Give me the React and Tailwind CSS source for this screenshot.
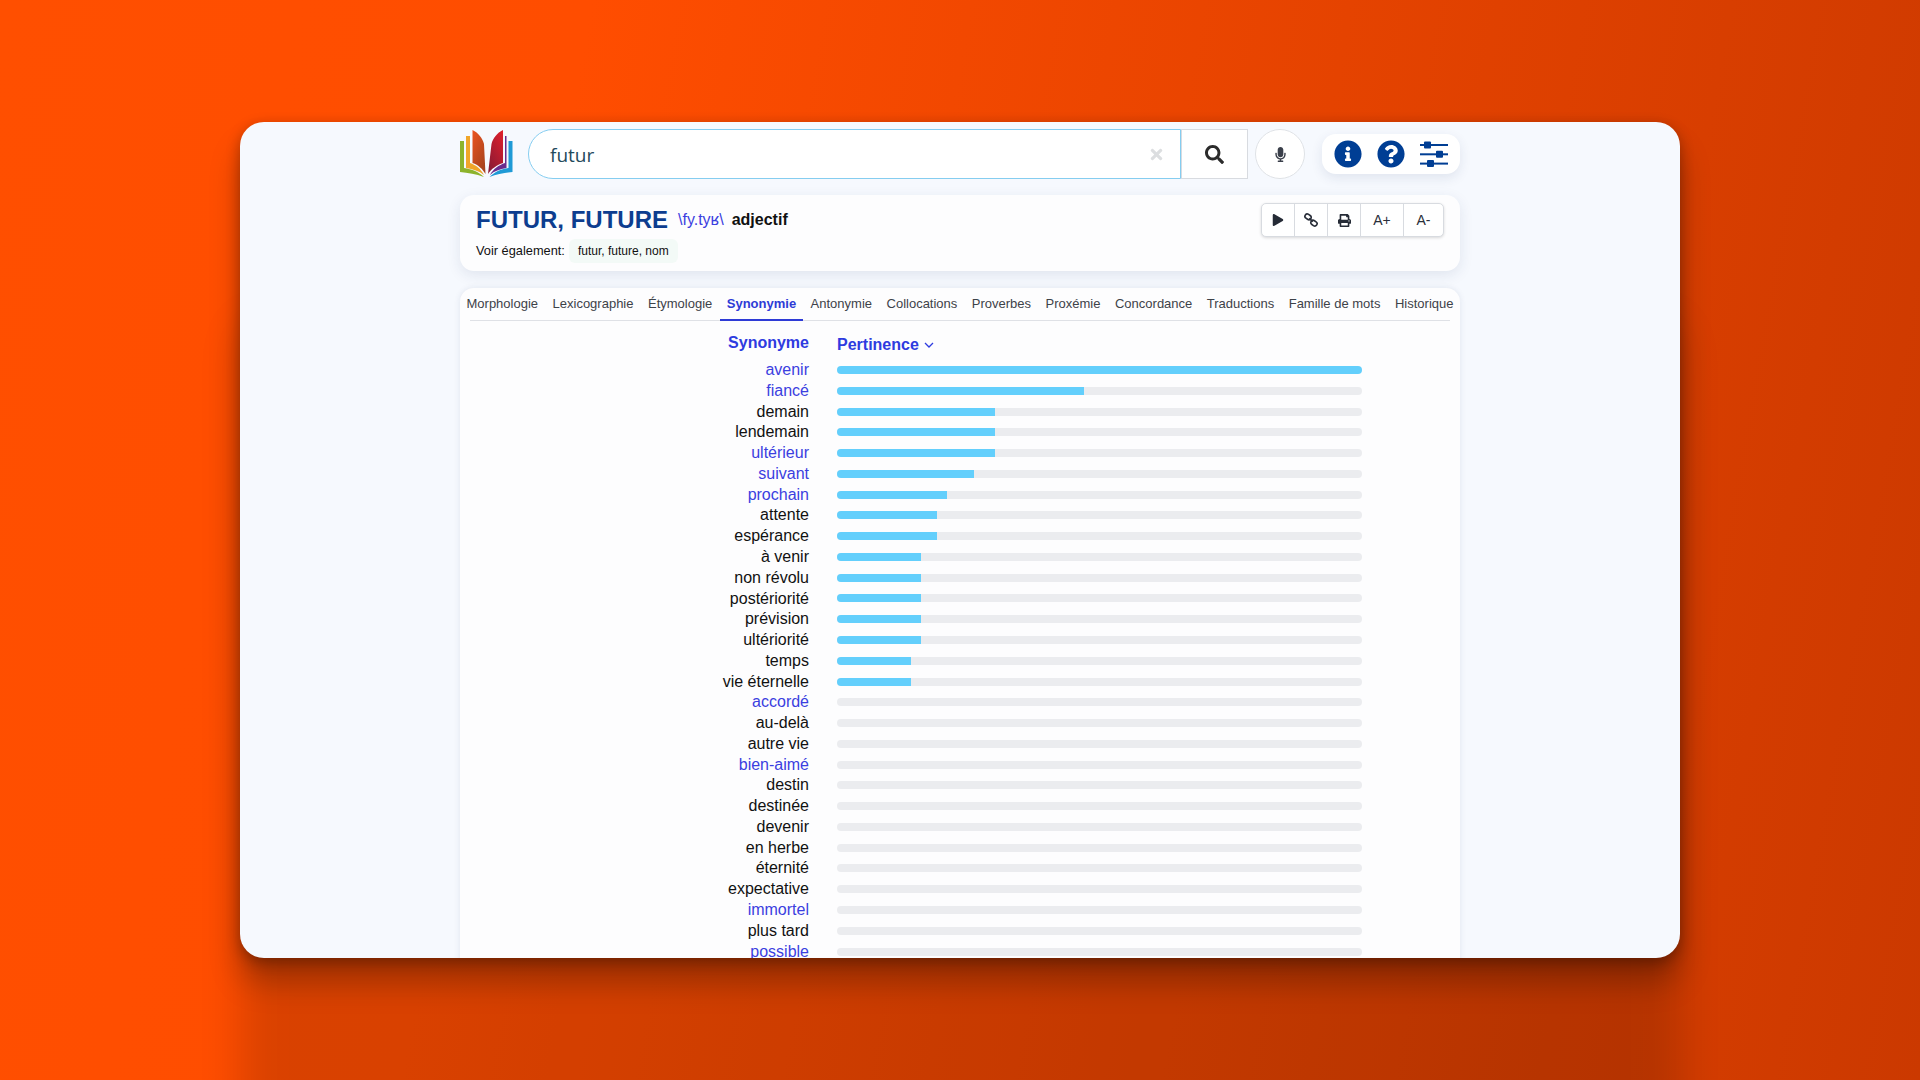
import React from "react";
import { FaInfoCircle, FaQuestionCircle, FaSearch, FaMicrophone, FaTimes, FaPlay, FaPrint } from "react-icons/fa";

const tabs = ["Morphologie","Lexicographie","Étymologie","Synonymie","Antonymie","Collocations","Proverbes","Proxémie","Concordance","Traductions","Famille de mots","Historique"];
const rows = [
  ["avenir",1,100],["fiancé",1,47],["demain",0,30],["lendemain",0,30],["ultérieur",1,30],["suivant",1,26],["prochain",1,21],["attente",0,19],["espérance",0,19],["à venir",0,16],["non révolu",0,16],["postériorité",0,16],["prévision",0,16],["ultériorité",0,16],["temps",0,14],["vie éternelle",0,14],["accordé",1,0],["au-delà",0,0],["autre vie",0,0],["bien-aimé",1,0],["destin",0,0],["destinée",0,0],["devenir",0,0],["en herbe",0,0],["éternité",0,0],["expectative",0,0],["immortel",1,0],["plus tard",0,0],["possible",1,0],
];

function Logo() {
  return (
    <svg viewBox="0 0 54 50" className="w-[54px] h-[50px] shrink-0">
      <defs>
        <linearGradient id="lg1" x1="0" y1="0" x2="0.6" y2="1"><stop offset="0" stopColor="#ec5420"/><stop offset="1" stopColor="#a8441e"/></linearGradient>
        <linearGradient id="lg2" x1="1" y1="0" x2="0.4" y2="1"><stop offset="0" stopColor="#e2202c"/><stop offset="1" stopColor="#8e1a34"/></linearGradient>
      </defs>
      <path d="M1 12h4v27c8 1 15 4 20 9-8-3-16-4-24-5z" fill="#8db32c"/>
      <path d="M7 7h4v27c6 2 11 6 14 12-5-4-11-6-18-7z" fill="#f0a62a"/>
      <path d="M13.500 1c6 3 10 8 11.500 14l1.500 30c-3-5-7-9-13-11z" fill="url(#lg1)"/>
      <path d="M44 1c-6 3-10 8-11.500 14L29 45c3-5 9-9 15-11z" fill="url(#lg2)"/>
      <path d="M47.500 7h-1.500v27c-6 2-12 6-15 12 4-4 10-6 16.500-7z" fill="#6a2c8e"/>
      <path d="M53.500 12h-4v27c-8 1-14 4-19 9 7-3 15-4 23-5z" fill="#1f9ad6"/>
    </svg>
  );
}

function Sliders() {
  return (
    <svg viewBox="0 0 28 28" className="w-[28px] h-[28px]" fill="#003e94">
      <rect x="0" y="4" width="28" height="2"/><rect x="4" y="1.500" width="7" height="7" rx="1"/>
      <rect x="0" y="13.300" width="28" height="2"/><rect x="16" y="10.800" width="7" height="7" rx="1"/>
      <rect x="0" y="22.600" width="28" height="2"/><rect x="7" y="20.100" width="7" height="7" rx="1"/>
    </svg>
  );
}

function LinkIcon() {
  return (
    <svg viewBox="0 0 14 14" className="w-[14px] h-[14px]" fill="none" stroke="#2a2f3a" strokeWidth="1.600">
      <rect x="0.800" y="1.500" width="6.500" height="4.600" rx="2.300" transform="rotate(35 4 3.800)"/>
      <rect x="6.700" y="7.900" width="6.500" height="4.600" rx="2.300" transform="rotate(35 10 10.200)"/>
      <path d="M5 5.500l4 3"/>
    </svg>
  );
}

export default function App() {
  return (
    <div className="w-full h-[1080px] overflow-hidden pt-[122px] font-['Liberation_Sans',Arial,sans-serif] bg-[linear-gradient(100deg,#ff4f00_0%,#ff4d00_28%,#cb3900_100%)]">
      <div className="w-[1440px] h-[836px] mx-auto bg-[#f6f9fe] rounded-[24px] overflow-hidden shadow-[0_4px_14px_rgba(0,0,0,0.3),0_25px_30px_rgba(0,0,0,0.26),0_200px_40px_rgba(0,0,0,0.15)]">
        <div className="w-[1000px] mx-auto">
          <div className="h-[73px] flex items-start pt-[7px] -ml-px">
            <Logo />
            <div className="ml-[15px] w-[721px] h-[50px] flex">
              <div className="flex-1 flex items-center bg-white border border-[#85cdf0] rounded-l-[25px] pl-[21px] pr-[15px]">
                <span className="flex-1 pt-[2px] text-[19px] text-[#1f4a5c] font-['Open_Sans',sans-serif]">futur</span>
                <FaTimes className="text-[#dcdee0] w-[17px] h-[17px]" />
              </div>
              <div className="w-[67px] flex items-center justify-center bg-white border border-l-[#d8dbe0] border-[#d8dbe0]">
                <FaSearch className="text-[#2b2b2b] w-[19px] h-[19px]" />
              </div>
            </div>
            <div className="ml-[7px] w-[50px] h-[50px] rounded-full bg-white border border-[#dfe2e6] flex items-center justify-center">
              <FaMicrophone className="text-[#3a3f4a] w-[13px] h-[15px]" />
            </div>
            <div className="ml-[17px] w-[138px] h-[40px] mt-[5px] bg-white rounded-[14px] shadow-[0_4px_12px_rgba(34,50,100,0.10)] flex items-center justify-between px-[12px]">
              <FaInfoCircle className="text-[#003e94] w-[28px] h-[28px]" />
              <FaQuestionCircle className="text-[#003e94] w-[28px] h-[28px]" />
              <Sliders />
            </div>
          </div>

          <div className="h-[76px] bg-[#fdfdfe] rounded-[14px] shadow-[0_4px_14px_rgba(34,50,100,0.10)] pl-[16px] pr-[16px] flex justify-between">
            <div>
              <div className="flex items-center mt-[10px] h-[30px]">
                <span className="text-[24px] font-bold text-[#0d3d8f] leading-[30px]">FUTUR, FUTURE</span>
                <span className="ml-[10px] text-[16px] text-[#3b3fe0]">\fy.tyʁ\</span>
                <span className="ml-[8px] text-[16px] font-bold text-[#111]">adjectif</span>
              </div>
              <div className="flex items-center mt-[4px] text-[#111]">
                <span className="text-[12.8px]">Voir également:</span>
                <span className="ml-[4px] px-[9px] h-[24px] flex items-center rounded-[6px] bg-[#f3faf7] text-[12px]">futur, future, nom</span>
              </div>
            </div>
            <div className="mt-[8px] h-[34px] flex bg-white border border-[#d8dbe0] rounded-[5px] shadow-[0_1px_3px_rgba(0,0,0,0.15)] text-[14px] text-[#2a2f3a]">
              <div className="w-[33px] flex items-center justify-center border-r border-[#d8dbe0]"><FaPlay className="w-[12px] h-[12px] text-[#252b36]" /></div>
              <div className="w-[33px] flex items-center justify-center border-r border-[#d8dbe0]"><LinkIcon /></div>
              <div className="w-[33px] flex items-center justify-center border-r border-[#d8dbe0]"><FaPrint className="w-[13px] h-[13px] text-[#252b36]" /></div>
              <div className="w-[43px] flex items-center justify-center border-r border-[#d8dbe0]">A+</div>
              <div className="w-[39px] flex items-center justify-center">A-</div>
            </div>
          </div>

          <div className="mt-[17px] h-[800px] bg-[#fdfdfe] rounded-t-[14px] shadow-[0_0_6px_rgba(34,50,100,0.10)]">
            <div className="mx-[10px] h-[33px] border-b border-[#dfe1e6]">
              <div className="-mx-[3.5px] flex justify-between text-[13px] text-[#3d4249]">
                {tabs.map((t) => (
                  <div key={t} className={t === "Synonymie" ? "-mx-[7px] px-[7px] h-[33px] pt-[6px] font-bold text-[#2e3bd6] border-b-2 border-[#2e3bd6]" : "pt-[6px]"}>{t}</div>
                ))}
              </div>
            </div>
            <div className="flex items-start mt-[12px] h-[26.7px] px-[6px]">
              <div className="w-[343px] text-right text-[16px] font-bold text-[#2e3be0] leading-[20px]">Synonyme</div>
              <div className="ml-[28px] flex items-center text-[16px] font-bold text-[#2e3be0] leading-[23px]">
                Pertinence
                <svg viewBox="0 0 10 6" className="ml-[5px] w-[10px] h-[6px]" fill="none" stroke="#2e3be0" strokeWidth="1.300"><path d="M1 1l4 4 4-4"/></svg>
              </div>
            </div>
            <div className="text-[16px] px-[6px]">
              {rows.map(([name, link, pct]) => (
                <div key={name} className="flex items-center h-[20.77px]">
                  <div className={link ? "w-[343px] text-right text-[#3b3fe0]" : "w-[343px] text-right text-[#111]"}>{name}</div>
                  <div className="ml-[28px] w-[525px] h-[8px] rounded-full bg-[#ebecef] overflow-hidden">
                    <div className="h-full bg-[#63cffc]" style={{ width: `${pct}%` }} />
                  </div>
                </div>
              ))}
            </div>
          </div>
        </div>
      </div>
    </div>
  );
}
